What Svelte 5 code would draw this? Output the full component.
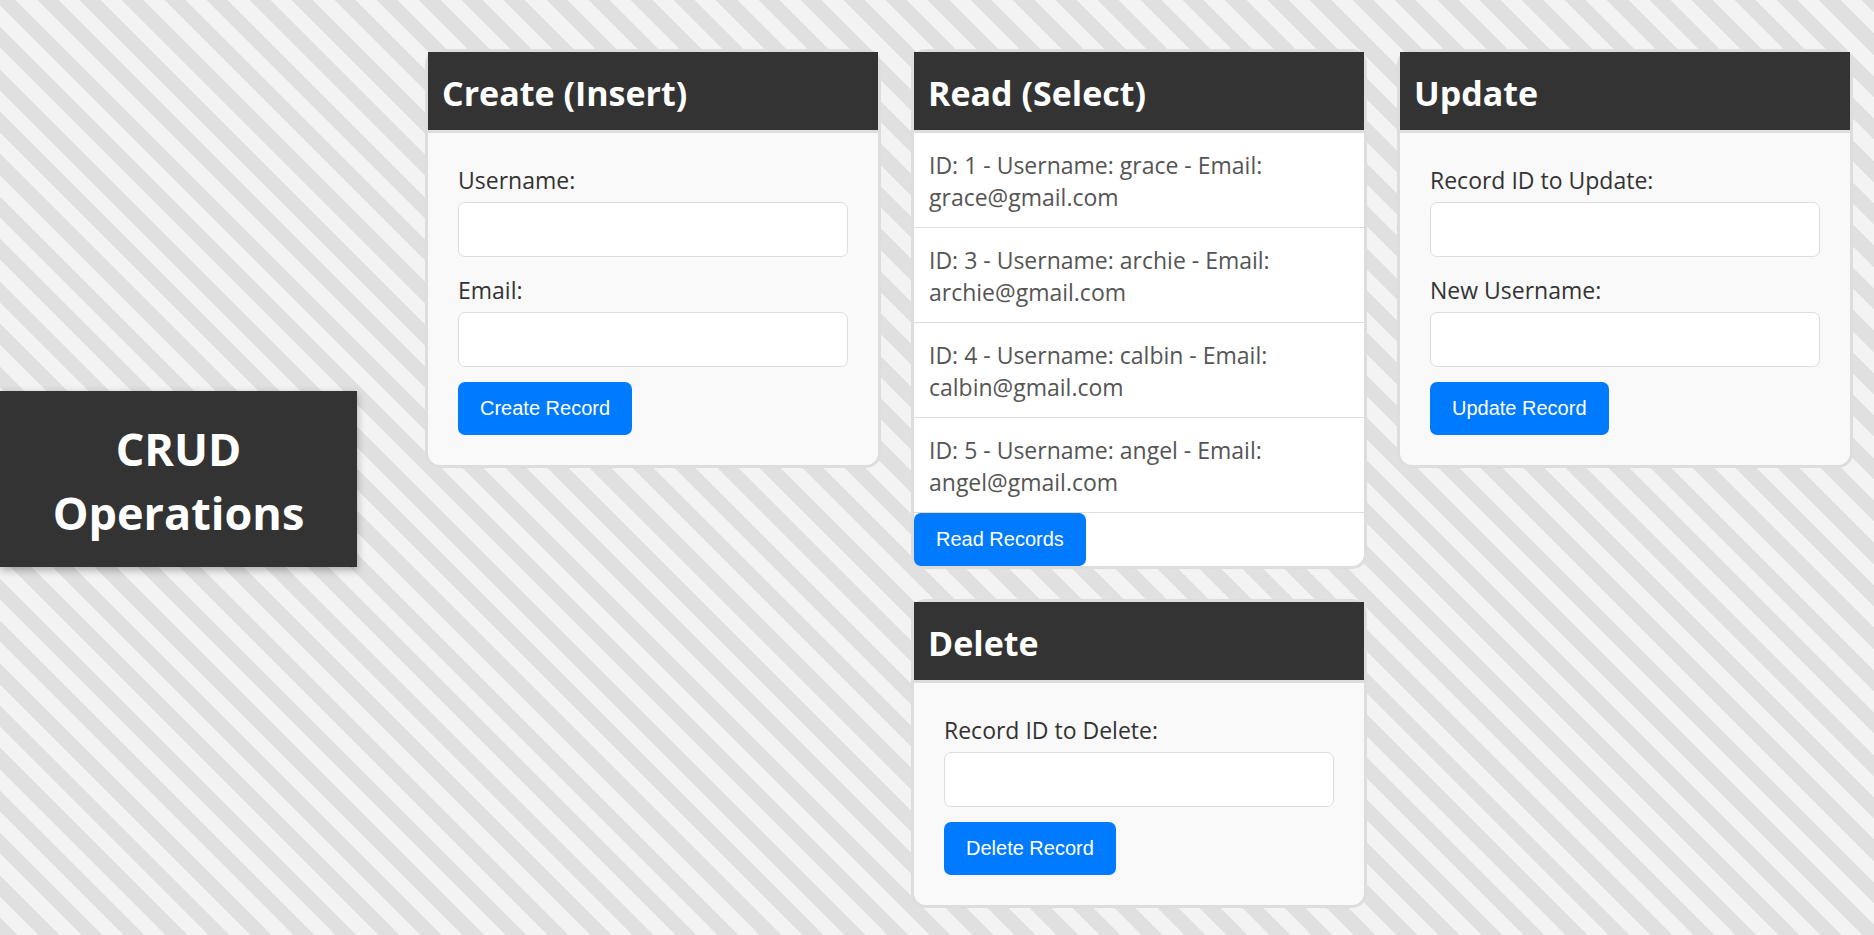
<script>
  let records = $state([
    { id: 1, username: 'grace', email: 'grace@gmail.com' },
    { id: 3, username: 'archie', email: 'archie@gmail.com' },
    { id: 4, username: 'calbin', email: 'calbin@gmail.com' },
    { id: 5, username: 'angel', email: 'angel@gmail.com' }
  ]);
</script>

{#snippet field(id, label)}
  <div class="field">
    <label for={id}>{label}</label>
    <input {id} type="text" />
  </div>
{/snippet}

<div class="page">
  <header class="title">
    <h1>CRUD Operations</h1>
  </header>

  <main class="cards">
    <section class="card">
      <h2>Create (Insert)</h2>
      <form onsubmit={(e) => e.preventDefault()}>
        <div class="fields">
          {@render field('create-username', 'Username:')}
          {@render field('create-email', 'Email:')}
        </div>
        <button type="submit">Create Record</button>
      </form>
    </section>

    <section class="card read">
      <h2>Read (Select)</h2>
      <ul>
        {#each records as record (record.id)}
          <li>ID: {record.id} - Username: {record.username} - Email: {record.email}</li>
        {/each}
      </ul>
      <button type="button">Read Records</button>
    </section>

    <section class="card">
      <h2>Update</h2>
      <form onsubmit={(e) => e.preventDefault()}>
        <div class="fields">
          {@render field('update-id', 'Record ID to Update:')}
          {@render field('update-username', 'New Username:')}
        </div>
        <button type="submit">Update Record</button>
      </form>
    </section>

    <section class="card delete">
      <h2>Delete</h2>
      <form onsubmit={(e) => e.preventDefault()}>
        <div class="fields">
          {@render field('delete-id', 'Record ID to Delete:')}
        </div>
        <button type="submit">Delete Record</button>
      </form>
    </section>
  </main>
</div>

<style>
  :global(body) {
    margin: 0;
  }

  .page {
    box-sizing: border-box;
    display: flex;
    align-items: center;
    min-height: 100vh;
    padding: 49px 21px 26px 0;
    font-family: 'Segoe UI', 'Open Sans', 'Noto Sans', sans-serif;
    font-size: 23px;
    line-height: 32px;
    color: #333;
    background: repeating-linear-gradient(45deg, #f3f3f3 0 15px, #e0e0e0 15px 30px);
    background-size: 100% calc(100% + 25px);
  }

  .title {
    box-sizing: border-box;
    flex: 0 0 357px;
    padding: 26px 30px 22px;
    background: #333;
    color: #fff;
    text-align: center;
    box-shadow: 0 3px 8px rgba(0, 0, 0, 0.3);
  }

  h1 {
    margin: 0;
    font-size: 45px;
    line-height: 64px;
    font-weight: 700;
  }

  .cards {
    flex: 1;
    align-self: flex-start;
    display: grid;
    grid-template-columns: repeat(3, minmax(0, 1fr));
    align-items: start;
    gap: 30px;
    margin-left: 68px;
  }

  .card {
    border: 3px solid #ddd;
    border-radius: 15px;
    background: #f9f9f9;
  }

  .read {
    background: #fff;
  }

  .delete {
    grid-column: 2;
  }

  h2 {
    margin: 0;
    padding: 17px 14px 13px;
    border-bottom: 3px solid #ddd;
    background: #333;
    color: #fff;
    font-size: 34px;
    line-height: 48px;
    font-weight: 700;
  }

  form {
    display: flex;
    flex-direction: column;
    align-items: flex-start;
    gap: 15px;
    padding: 31px 30px 30px;
  }

  .fields {
    display: flex;
    flex-direction: column;
    gap: 17px;
    width: 100%;
  }

  .field {
    display: flex;
    flex-direction: column;
    gap: 6px;
  }

  input {
    box-sizing: border-box;
    width: 100%;
    height: 55px;
    padding: 0 12px;
    border: 1px solid #ddd;
    border-radius: 7px;
    background: #fff;
    font: inherit;
    color: #333;
  }

  ul {
    margin: 0;
    padding: 0;
    list-style: none;
    color: #555;
  }

  li {
    padding: 16px 15px 14px;
    border-bottom: 1px solid #ddd;
  }

  button {
    display: block;
    padding: 15px 22px;
    border: 0;
    border-radius: 7px;
    background: #007bff;
    color: #fff;
    font-family: 'Liberation Sans', Arial, sans-serif;
    font-size: 20px;
    line-height: 23px;
    cursor: pointer;
  }
</style>
